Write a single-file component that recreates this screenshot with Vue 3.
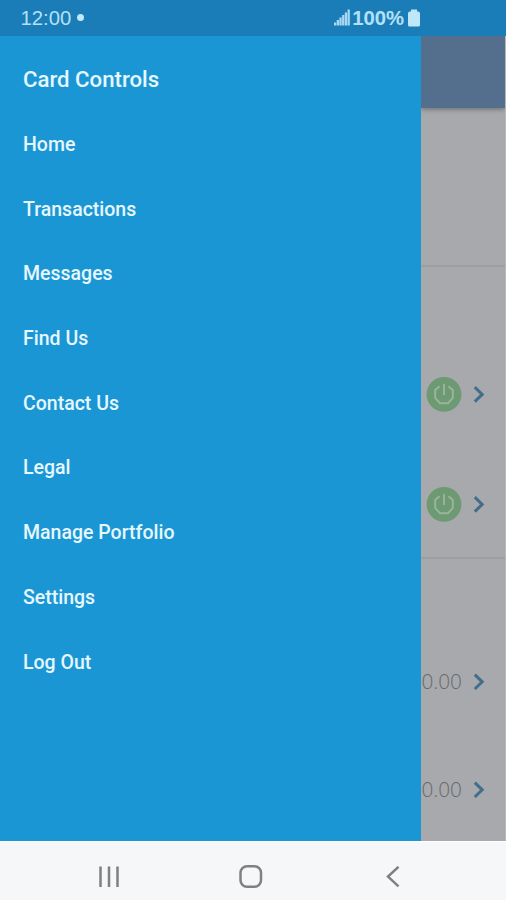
<script setup>
const menu = [
  'Card Controls', 'Home', 'Transactions', 'Messages', 'Find Us',
  'Contact Us', 'Legal', 'Manage Portfolio', 'Settings', 'Log Out',
]
const switches = [1, 2]
const amounts = ['0.00', '0.00']
const bars = [3, 5.5, 8, 10.5, 13, 16]
</script>

<template>
  <div class="phone">
    <header class="status">
      <div class="clock"><span>12:00</span><i class="dot"></i></div>
      <div class="indicators">
        <svg class="signal" width="16" height="17" viewBox="0 0 16 17">
          <rect v-for="(h, i) in bars" :key="i" :x="i * 2.7" :y="16.5 - h" width="2.3" :height="h" />
        </svg>
        <span class="percent">100%</span>
        <svg class="battery" width="12" height="18" viewBox="0 0 12 18">
          <path d="M3 0.5h6v2h1q2 0 2 2v11.500q0 1.500-1.500 1.500h-9q-1.500 0-1.500-1.500v-11.500q0-2 2-2h1z" />
        </svg>
      </div>
    </header>

    <div class="body">
      <nav class="drawer">
        <a v-for="(item, i) in menu" :key="item" class="item" :class="{ title: i === 0 }"><span>{{ item }}</span></a>
      </nav>
      <main class="page">
        <div class="appbar"></div>
        <section class="summary"></section>
        <section class="controls">
          <div v-for="s in switches" :key="s" class="row">
            <svg class="power" width="36" height="36" viewBox="0 0 36 36">
              <circle cx="18" cy="18.400" r="17.400" />
              <path d="M13.500 10.200L9.200 14V22L14 27.200H22L26.800 22V14L22.500 10.200M18 8V19" />
            </svg>
            <svg class="chevron" width="12" height="18" viewBox="0 0 12 18"><path d="M1.800 2.200L9.200 9.400L1.800 16.600" /></svg>
          </div>
        </section>
        <section class="amounts">
          <div v-for="(a, i) in amounts" :key="i" class="row">
            <span class="amount">{{ a }}</span>
            <svg class="chevron" width="12" height="18" viewBox="0 0 12 18"><path d="M1.800 1.600L9.200 8.800L1.800 16" /></svg>
          </div>
        </section>
      </main>
    </div>

    <footer class="navbar">
      <svg width="22" height="22" viewBox="0 0 22 22"><path d="M2.500 0.500V21M11 0.500V21M19.500 0.500V21" /></svg>
      <svg class="home" width="24" height="24" viewBox="0 0 24 24"><rect x="1.500" y="1.300" width="20.500" height="20.500" rx="6.500" /></svg>
      <svg width="14" height="22" viewBox="0 0 14 22"><path d="M12.500 0.800L2 10.600L12.500 20.400" /></svg>
    </footer>
  </div>
</template>

<style>
body { margin: 0; }
</style>

<style scoped>
.phone {
  width: 506px;
  height: 900px;
  display: flex;
  flex-direction: column;
  overflow: hidden;
  background: #f5f7f9;
  font-family: Roboto, "Liberation Sans", sans-serif;
}
.status {
  height: 36px;
  flex: none;
  box-sizing: border-box;
  padding: 0 86px 1px 20.500px;
  display: flex;
  align-items: center;
  justify-content: space-between;
  background: #1a7db7;
  color: #b3e0f8;
  font-family: "Liberation Sans", Arial, sans-serif;
  font-size: 20.300px;
  line-height: 24px;
}
.clock, .indicators { display: flex; align-items: center; }
.dot { width: 7px; height: 7px; margin-left: 6px; border-radius: 50%; background: #c3e9fb; }
.signal { fill: #a8d8f2; }
.percent { margin-left: 2px; font-weight: bold; }
.battery { margin-left: 4px; fill: #bfe7fa; }
.body { flex: 1; min-height: 0; display: flex; }
.drawer {
  width: 421px;
  flex: none;
  box-sizing: border-box;
  padding: 11.300px 0 0 23px;
  background: #1b96d4;
}
.item {
  height: 64.730px;
  box-sizing: border-box;
  display: flex;
  align-items: center;
  color: #e6f7fe;
  font-size: 19.500px;
  font-weight: 500;
}
.title { padding-bottom: 1.500px; font-size: 22.200px; }
.page {
  flex: 1;
  min-width: 0;
  display: flex;
  flex-direction: column;
  overflow: hidden;
  box-sizing: border-box;
  border-right: 1px solid #b7b8ba;
  background: #a7a9ac;
}
.appbar { height: 72px; flex: none; background: #546f8d; box-shadow: 0 1px 5px #66686b; }
.summary, .controls { flex: none; box-sizing: border-box; border-bottom: 2px solid #9c9ea1; }
.summary { height: 159px; }
.controls { height: 292px; padding-top: 72px; }
.row {
  height: 110px;
  flex: none;
  display: flex;
  align-items: center;
  justify-content: flex-end;
  padding-right: 20px;
}
.amounts { flex: none; padding-top: 69px; }
.amounts .row { height: 108px; }
.power circle { fill: #6d9a72; }
.power path { fill: none; stroke: #99b59c; stroke-width: 1.900; }
.chevron { margin-left: 11px; flex: none; }
.chevron path { fill: none; stroke: #426e8b; stroke-width: 3; }
.amount { padding-bottom: 2px; color: #67696c; font-family: "Open Sans", sans-serif; font-size: 20.800px; font-weight: 300; line-height: 28px; }
.navbar {
  height: 59px;
  flex: none;
  box-sizing: border-box;
  padding: 11px 106px 0 98px;
  display: flex;
  align-items: center;
  justify-content: space-between;
  border-top: 1px solid #fff;
  background: #f5f7f9;
}
.navbar svg { fill: none; stroke: #7e8082; stroke-width: 2.500; }
.navbar .home { margin-right: 4px; }
</style>
